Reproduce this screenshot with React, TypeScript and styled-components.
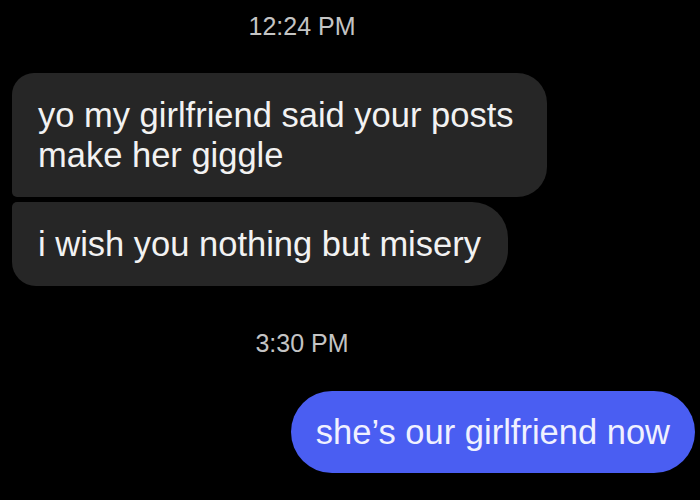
import styled, { createGlobalStyle } from 'styled-components';

const GlobalStyle = createGlobalStyle`
  html, body {
    margin: 0;
    padding: 0;
    background: #000;
  }
  body {
    font-family: "Liberation Sans", Arial, sans-serif;
    -webkit-font-smoothing: antialiased;
  }
`;

const Thread = styled.div`
  width: 700px;
  height: 500px;
  overflow: hidden;
  background: #000;
  display: flex;
  flex-direction: column;
  padding: 11px 5px 0 12px;
  box-sizing: border-box;
`;

const Timestamp = styled.div<{ $gap: number }>`
  margin-top: ${p => p.$gap}px;
  width: 580px;
  text-align: center;
  font-size: 25px;
  line-height: 30px;
  color: #c4c4c4;
`;

const Group = styled.div<{ $gap: number }>`
  margin-top: ${p => p.$gap}px;
  display: flex;
  flex-direction: column;
  align-items: flex-start;
  gap: 5px;
`;

type Corner = 'first' | 'last';

const Received = styled.div<{ $pos: Corner }>`
  max-width: 535px;
  box-sizing: border-box;
  padding: 22px 27px 22px 26px;
  background: #262626;
  color: #f2f2f2;
  font-size: 34.5px;
  line-height: 40px;
  border-radius: ${p =>
    p.$pos === 'first' ? '22px 30px 30px 5px' : '5px 36px 36px 24px'};
`;

const SentRow = styled.div`
  margin-top: 33px;
  display: flex;
  justify-content: flex-end;
`;

const Sent = styled.div`
  padding: 21px 25px;
  background: #4a5ef2;
  color: #f0f1ff;
  font-size: 34.5px;
  line-height: 40px;
  border-radius: 41px;
`;

export default function App() {
  return (
    <>
      <GlobalStyle />
      <Thread>
        <Timestamp $gap={0}>12:24 PM</Timestamp>
        <Group $gap={32}>
          <Received $pos="first">yo my girlfriend said your posts make her giggle</Received>
          <Received $pos="last">i wish you nothing but misery</Received>
        </Group>
        <Timestamp $gap={42}>3:30 PM</Timestamp>
        <SentRow>
          <Sent>she’s our girlfriend now</Sent>
        </SentRow>
      </Thread>
    </>
  );
}
